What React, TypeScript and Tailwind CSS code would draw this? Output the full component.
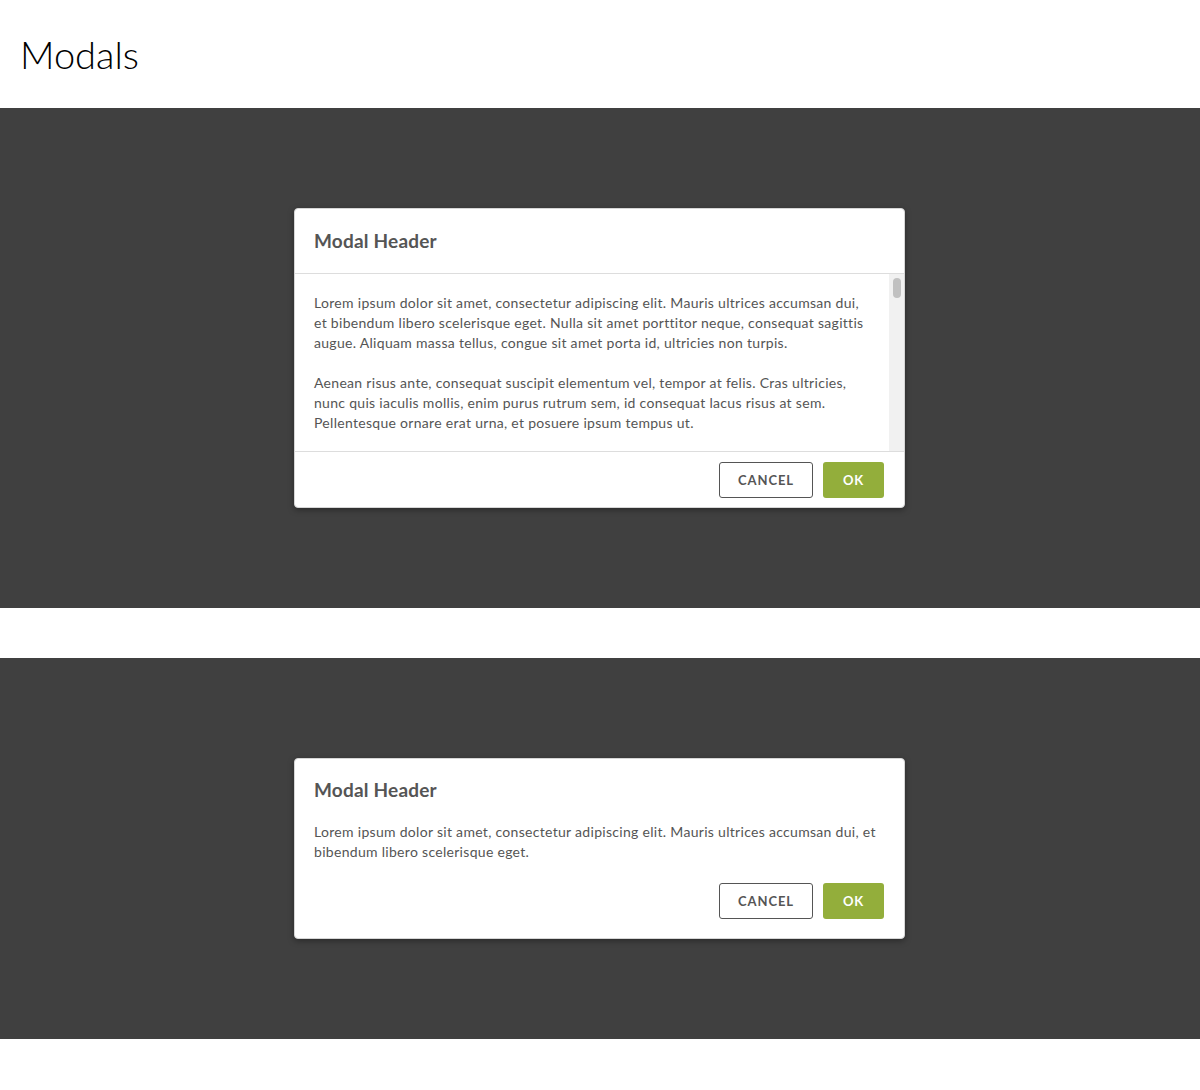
const paragraphs = [
  "Lorem ipsum dolor sit amet, consectetur adipiscing elit. Mauris ultrices accumsan dui, et bibendum libero scelerisque eget. Nulla sit amet porttitor neque, consequat sagittis augue. Aliquam massa tellus, congue sit amet porta id, ultricies non turpis.",
  "Aenean risus ante, consequat suscipit elementum vel, tempor at felis. Cras ultricies, nunc quis iaculis mollis, enim purus rutrum sem, id consequat lacus risus at sem. Pellentesque ornare erat urna, et posuere ipsum tempus ut.",
  "Vivamus vitae lorem eget justo faucibus tincidunt. Integer pretium, purus a ultricies feugiat, velit nisl pretium orci, quis gravida lectus neque at ipsum. Donec aliquet ligula non dui aliquam, vel luctus mi cursus.",
  "Curabitur at felis sed nulla mattis lobortis. Sed tincidunt ex vitae nisl aliquet, eget consequat massa iaculis. Phasellus eget ante nec mauris cursus viverra sit amet ut arcu.",
];

function Buttons() {
  return (
    <div className="flex justify-end gap-[10px]">
      <button className="h-9 w-[94px] rounded-[3px] border border-[#555] bg-white pt-px text-[13px] font-bold tracking-[0.9px] text-[#555]">
        CANCEL
      </button>
      <button className="h-9 w-[61px] rounded-[3px] bg-[#93ae3b] pt-px text-[13px] font-bold tracking-[0.9px] text-white">
        OK
      </button>
    </div>
  );
}

export default function App() {
  return (
    <div className="min-h-[1090px] bg-white font-['Lato','Noto_Sans',sans-serif] text-[#555]">
      <div className="flex h-[108px] items-center px-[20px]">
        <h1 className="text-[38px] font-light text-black">Modals</h1>
      </div>

      {/* Scrolling modal */}
      <div className="flex justify-center bg-[#404040] py-[100px] pr-[1px]">
        <div className="flex h-[300px] w-[611px] flex-col overflow-hidden rounded-[4px] border border-[#d6d6d6] bg-white shadow-[0_2px_6px_rgba(0,0,0,0.35)]">
          <div className="border-b border-[#ddd] px-[19px] py-[20px]">
            <h2 className="text-[19px] font-bold leading-[24px] tracking-[0.2px]">Modal Header</h2>
          </div>
          <div className="flex min-h-0 flex-1">
            <div className="flex-1 overflow-hidden pl-[19px] pr-[20px] pt-[19px]">
              {paragraphs.map((p, i) => (
                <p key={i} className="mb-[20px] text-[14px] leading-[20px] tracking-[0.3px]">
                  {p}
                </p>
              ))}
            </div>
            <div className="flex w-[15px] justify-center bg-[#f1f1f1] pt-[4px]">
              <div className="h-[20px] w-[8px] rounded-full bg-[#c1c1c1]" />
            </div>
          </div>
          <div className="border-t border-[#ddd] px-[20px] pb-[9px] pt-[10px]">
            <Buttons />
          </div>
        </div>
      </div>

      <div className="h-[50px]" />

      {/* Simple modal */}
      <div className="flex justify-center bg-[#404040] py-[100px] pr-[1px]">
        <div className="w-[611px] rounded-[4px] border border-[#d6d6d6] bg-white px-[19px] pb-[19px] pt-[19px] shadow-[0_2px_6px_rgba(0,0,0,0.35)]">
          <h2 className="text-[19px] font-bold leading-[24px] tracking-[0.2px]">Modal Header</h2>
          <p className="mt-[20px] pr-[1px] text-[14px] leading-[20px] tracking-[0.3px]">
            Lorem ipsum dolor sit amet, consectetur adipiscing elit. Mauris ultrices accumsan dui, et bibendum libero scelerisque eget.
          </p>
          <div className="mt-[21px] pr-[1px]">
            <Buttons />
          </div>
        </div>
      </div>
    </div>
  );
}
